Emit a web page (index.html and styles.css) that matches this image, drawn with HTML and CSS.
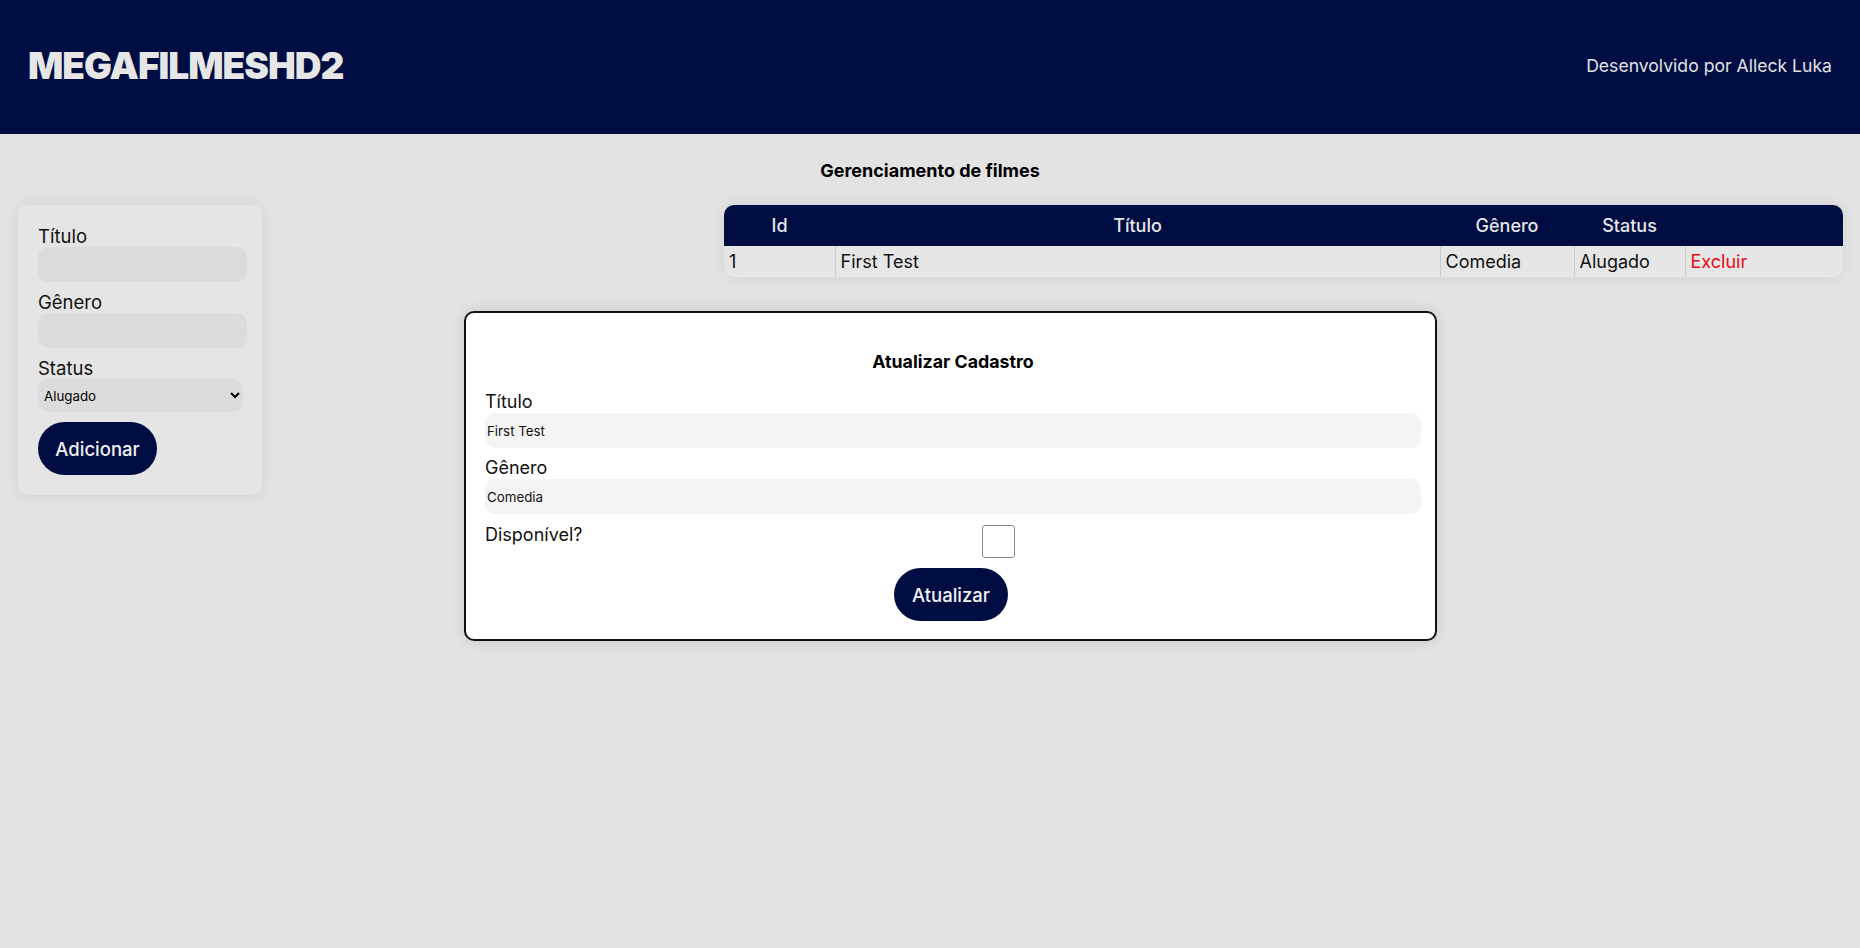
FILE: index.html
```html
<!DOCTYPE html>
<html lang="pt-BR">
<head>
<meta charset="utf-8">
<title>MEGAFILMESHD2</title>
<link rel="stylesheet" href="styles.css">
</head>
<body>
<header class="topbar">
  <h1 class="logo">MEGAFILMESHD2</h1>
  <p class="credit">Desenvolvido por Alleck Luka</p>
</header>
<main class="main">
  <h2 class="page-title">Gerenciamento de filmes</h2>
  <div class="content">
    <form class="card">
      <div class="field">
        <label class="lbl">Título</label>
        <input class="inp" type="text">
      </div>
      <div class="field">
        <label class="lbl">Gênero</label>
        <input class="inp" type="text">
      </div>
      <div class="field">
        <label class="lbl">Status</label>
        <select class="sel">
          <option>Alugado</option>
          <option>Disponível</option>
        </select>
      </div>
      <button class="btn btn-add" type="button">Adicionar</button>
    </form>
    <table class="movies">
      <colgroup>
        <col class="c-id"><col class="c-title"><col class="c-genre"><col class="c-status"><col class="c-action">
      </colgroup>
      <thead>
        <tr><th>Id</th><th>Título</th><th>Gênero</th><th>Status</th><th></th></tr>
      </thead>
      <tbody>
        <tr><td>1</td><td>First Test</td><td>Comedia</td><td>Alugado</td><td class="del">Excluir</td></tr>
      </tbody>
    </table>
  </div>
</main>
<div class="modal">
  <h3 class="modal-title">Atualizar Cadastro</h3>
  <label class="lbl">Título</label>
  <input class="inp inp-light" type="text" value="First Test">
  <label class="lbl lbl-gap">Gênero</label>
  <input class="inp inp-light" type="text" value="Comedia">
  <div class="check-row">
    <label class="lbl">Disponível?</label>
    <span class="checkbox"></span>
  </div>
  <div class="modal-actions">
    <button class="btn btn-update" type="button">Atualizar</button>
  </div>
</div>
</body>
</html>
```

FILE: styles.css
```css
* { box-sizing: border-box; }
html, body { margin: 0; padding: 0; }
body {
  background: #e3e3e3;
  font-family: Inter, "Noto Sans", sans-serif;
  color: #111;
  min-height: 948px;
  position: relative;
}
.topbar {
  height: 134px;
  background: #000d42;
  display: flex;
  align-items: center;
  justify-content: space-between;
  padding: 0 28px 4px 28px;
}
.logo {
  margin: 0;
  font-size: 37px;
  font-weight: 900;
  letter-spacing: -1px;
  color: #e6e6e6;
  line-height: 1;
}
.credit {
  margin: 0;
  font-size: 17.6px;
  color: #e2e2e2;
}
.main { padding: 0; }
.page-title {
  margin: 0;
  padding-top: 26px;
  height: 71px;
  text-align: center;
  font-size: 18px;
  font-weight: 700;
  line-height: 21px;
  color: #000;
}
.content {
  display: flex;
  align-items: flex-start;
  padding: 0 17px 0 18px;
}
.card {
  width: 244px;
  background: #e5e5e5;
  border-radius: 9px;
  padding: 21px 15px 20px 20px;
  box-shadow: 0 0 16px rgba(0,0,0,0.08);
}
.field { margin-bottom: 10px; }
.lbl {
  display: block;
  font-size: 18.5px;
  line-height: 20px;
  color: #111;
}
.inp {
  display: block;
  width: 100%;
  height: 35px;
  margin-top: 1px;
  border: none;
  border-radius: 10px;
  background: #dcdcdc;
  font-family: Inter, sans-serif;
  font-size: 13.33px;
  padding: 1px 2px;
  color: #111;
  outline: none;
}
.sel {
  display: block;
  width: 205px;
  height: 33px;
  margin-top: 1px;
  border: none;
  border-radius: 10px;
  background: #dcdcdc;
  font-family: Inter, sans-serif;
  font-size: 13.33px;
  color: #000;
  padding: 0 2px;
}
.btn {
  border: none;
  background: #000d42;
  color: #f0f0f0;
  font-family: Inter, sans-serif;
  font-size: 18.5px;
  font-weight: 500;
  border-radius: 27px;
  height: 53px;
  cursor: pointer;
}
.btn-add { width: 119px; display: block; }
.movies {
  margin-left: auto;
  width: 1119px;
  border-collapse: collapse;
  table-layout: fixed;
  border-radius: 10px;
  overflow: hidden;
  box-shadow: 0 0 16px rgba(0,0,0,0.08);
  font-size: 18px;
}
.c-id { width: 111px; }
.c-title { width: 605px; }
.c-genre { width: 134px; }
.c-status { width: 111px; }
.c-action { width: 158px; }
.movies th {
  background: #000d42;
  color: #e6e6e6;
  font-weight: 500;
  height: 41px;
  padding: 0 4px;
  text-align: center;
  line-height: 22px;
}
.movies td {
  background: #e6e6e6;
  height: 31px;
  padding: 0 5px;
  line-height: 22px;
  color: #111;
  border-left: 1px solid #cdcdcd;
  white-space: nowrap;
}
.movies td:first-child { border-left: none; }
.movies td.del { color: #e50914; }
.modal {
  position: absolute;
  left: 464px;
  top: 311px;
  width: 973px;
  height: 330px;
  background: #fff;
  border: 2px solid #111;
  border-radius: 10px;
  padding: 38px 14px 0 19px;
  box-shadow: 0 0 14px rgba(0,0,0,0.12);
}
.modal-title {
  margin: 0 0 20px 0;
  text-align: center;
  font-size: 17.8px;
  font-weight: 700;
  line-height: 21px;
  color: #000;
}
.modal .lbl { font-size: 18px; }
.inp-light { background: #f4f4f4; height: 35px; }
.lbl-gap { margin-top: 10px; }
.check-row {
  display: flex;
  align-items: flex-start;
  margin-top: 11px;
}
.check-row .lbl { width: 497px; }
.checkbox {
  width: 33px;
  height: 33px;
  border: 1px solid #8a8a8a;
  border-radius: 3px;
  background: #fff;
}
.modal-actions {
  display: flex;
  justify-content: center;
  margin-top: 10px;
}
.btn-update { width: 114px; margin-left: -4px; }
```
